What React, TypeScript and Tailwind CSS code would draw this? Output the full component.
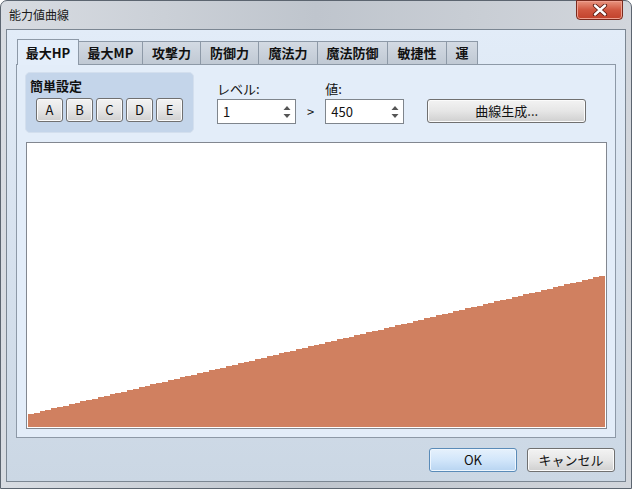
import React from 'react';

const tabs = [
  { label: '最大HP', w: 'w-[62px]' },
  { label: '最大MP', w: 'w-[65px]' },
  { label: '攻撃力', w: 'w-[59px]' },
  { label: '防御力', w: 'w-[59px]' },
  { label: '魔法力', w: 'w-[60px]' },
  { label: '魔法防御', w: 'w-[71px]' },
  { label: '敏捷性', w: 'w-[60px]' },
  { label: '運', w: 'w-[32px]' },
];

// chart area inside the white box
const CW = 577;
const CH = 283;

function curvePath() {
  const n = 99;
  const step = CW / n;
  let d = `M0,${CH}`;
  for (let i = 0; i < n; i++) {
    const h = 13 + (i * 138) / 98;
    const y = (CH - h).toFixed(1);
    d += ` L${(i * step).toFixed(2)},${y} L${((i + 1) * step).toFixed(2)},${y}`;
  }
  return d + ` L${CW},${CH} Z`;
}

const Spinner = ({ value }: { value: string }) => (
  <div className="flex h-[25px] w-[79px] items-center justify-between border border-[#7f858c] bg-white pl-[5px] pr-[4px]">
    <span className="text-[13px] text-[#111]">{value}</span>
    <svg width="8" height="16" viewBox="0 0 8 16">
      <path d="M4 2 L7.5 6 L0.5 6 Z" fill="#555" />
      <path d="M0.5 10 L7.5 10 L4 14 Z" fill="#555" />
    </svg>
  </div>
);

const Btn = ({ children, className = '' }: { children: React.ReactNode; className?: string }) => (
  <div
    className={`flex h-[24px] items-center justify-center rounded-[3px] border border-[#707070] bg-gradient-to-b from-[#f3f3f3] via-[#e6e6e6] to-[#cfcfcf] text-[13px] text-[#111] shadow-[inset_0_0_0_1px_#fbfbfb] ${className}`}
  >
    {children}
  </div>
);

export default function App() {
  return (
    <div
      className="h-[489px] w-[632px] overflow-hidden bg-white"
      style={{ fontFamily: '"Noto Sans CJK JP", "Noto Sans", sans-serif' }}
    >
      <div className="relative flex h-full w-full flex-col rounded-t-[7px] border border-[#5c6570] bg-gradient-to-r from-[#d8dce2] via-[#bfc5cd] to-[#d2d6dc]">
        {/* title bar */}
        <div className="flex h-[28px] items-center pl-[8px] text-[12px] text-[#1a1a1a]">能力値曲線</div>
        <div className="absolute right-[8px] top-[-1px] flex h-[20px] w-[47px] items-center justify-center rounded-b-[4px] border border-[#7a2a1d] bg-gradient-to-b from-[#e8947f] via-[#d0563f] to-[#c2412b] shadow-[inset_0_0_0_1px_#efa090]">
          <svg width="16" height="12" viewBox="0 0 16 12">
            <path d="M3 1.5 L13 10.5 M13 1.5 L3 10.5" stroke="#5a1a10" strokeWidth="4.2" strokeLinecap="round" />
            <path d="M3 1.5 L13 10.5 M13 1.5 L3 10.5" stroke="#fff" strokeWidth="2.4" strokeLinecap="round" />
          </svg>
        </div>

        {/* client */}
        <div className="mx-[5px] mb-[6px] flex flex-1 flex-col border border-[#7b8692] bg-gradient-to-b from-[#e2ecf8] to-[#cbd7e4] pl-[9px] pt-[9px]">
          {/* tabs */}
          <div className="relative z-10 flex h-[25px] items-end">
            {tabs.map((t, i) =>
              i === 0 ? (
                <div
                  key={t.label}
                  className={`${t.w} ml-[1px] mb-[-1px] flex h-[26px] items-center justify-center border border-b-0 border-[#8d99a7] bg-[#e4eefa] text-[13px] font-bold text-[#111]`}
                >
                  {t.label}
                </div>
              ) : (
                <div
                  key={t.label}
                  className={`${t.w} -ml-px flex h-[23px] items-center justify-center border border-b-0 border-[#8d99a7] bg-gradient-to-b from-[#d3dae3] to-[#c0c9d4] text-[13px] font-bold text-[#111]`}
                >
                  {t.label}
                </div>
              ),
            )}
          </div>

          {/* tab panel */}
          <div className="flex h-[374px] w-[600px] flex-col border border-[#8d99a7] bg-[#e3edf9] pl-[8px] pt-[7px]">
            <div className="flex h-[61px]">
              <div className="flex w-[169px] flex-col rounded-[5px] border border-[#d3dfee] bg-[#c4d5ea] pl-[4px] pt-[3px]">
                <div className="h-[19px] text-[13px] font-bold leading-[19px] text-[#111]">簡単設定</div>
                <div className="ml-[6px] mt-[3px] flex gap-[3px]">
                  {['A', 'B', 'C', 'D', 'E'].map((c) => (
                    <Btn key={c} className="w-[27px]">
                      {c}
                    </Btn>
                  ))}
                </div>
              </div>

              <div className="ml-[23px] flex flex-col">
                <div className="mt-[8px] h-[18px] text-[13px] leading-[18px] text-[#111]">レベル:</div>
                <div className="mt-[1px]">
                  <Spinner value="1" />
                </div>
              </div>

              <div className="ml-[11px] mt-[29px] text-[13px] leading-[22px] text-[#111]">&gt;</div>

              <div className="ml-[11px] flex flex-col">
                <div className="mt-[8px] h-[18px] text-[13px] leading-[18px] text-[#111]">値:</div>
                <div className="mt-[1px]">
                  <Spinner value="450" />
                </div>
              </div>

              <div className="ml-[23px] mt-[27px]">
                <Btn className="w-[159px]">曲線生成...</Btn>
              </div>
            </div>

            {/* chart */}
            <div className="ml-[1px] mt-[9px] h-[287px] w-[581px] border border-[#828790] bg-white p-[1px]">
              <svg width={CW} height={CH} viewBox={`0 0 ${CW} ${CH}`} className="block">
                <path d={curvePath()} fill="#d08060" shapeRendering="crispEdges" />
              </svg>
            </div>
          </div>

          {/* dialog buttons */}
          <div className="mt-[10px] flex justify-end gap-[10px] pr-[10px]">
            <div className="flex h-[24px] w-[88px] items-center justify-center rounded-[3px] border border-[#5a8bb8] bg-gradient-to-b from-[#e6f1fc] via-[#d2e6fa] to-[#b7d4f1] text-[13px] text-[#111] shadow-[inset_0_0_0_1px_#eef6fe]">
              OK
            </div>
            <Btn className="w-[88px]">キャンセル</Btn>
          </div>
        </div>
      </div>
    </div>
  );
}
